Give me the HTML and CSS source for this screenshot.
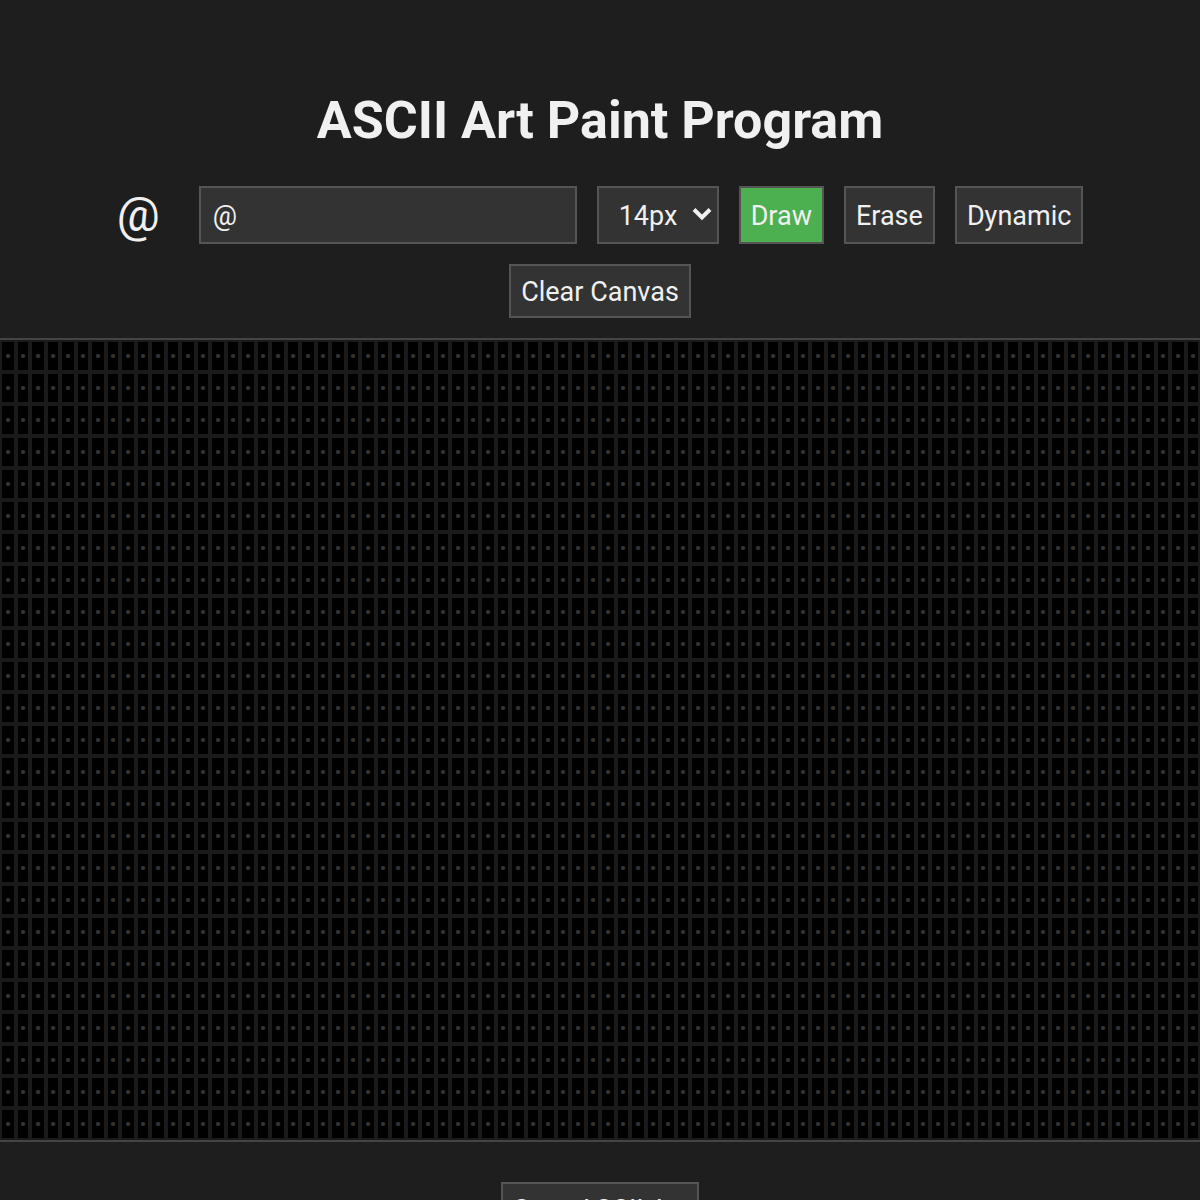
FILE: index.html
```html
<!DOCTYPE html>
<html lang="en">
<head>
    <meta charset="UTF-8">
    <meta name="viewport" content="width=device-width, initial-scale=1.0">
    <title>ASCII Art Paint Program</title>
    <link rel="stylesheet" href="styles.css">
</head>
<body>
    <h1>ASCII Art Paint Program</h1>
    <div class="controls">
        <div class="preview" id="preview">@</div>
        <input type="text" class="char-input" id="char-input" aria-label="Character" maxlength="1" value="@">
        <div class="size-picker">
            <select id="font-size" aria-label="Font size">
                <option>10px</option>
                <option>12px</option>
                <option selected>14px</option>
                <option>16px</option>
                <option>20px</option>
            </select>
            <svg class="arrow" viewBox="0 0 20 14" aria-hidden="true">
                <path d="M2 2.5 L10 10.5 L18 2.5" fill="none" stroke="#f0f0f0" stroke-width="4"/>
            </svg>
        </div>
        <button class="tool active" id="draw-btn">Draw</button>
        <button class="tool" id="erase-btn">Erase</button>
        <button class="tool" id="dynamic-btn">Dynamic</button>
        <button class="tool" id="clear-btn">Clear Canvas</button>
    </div>
    <div class="canvas" id="canvas"></div>
    <div class="footer">
        <button class="tool" id="save-btn">Save ASCII Art</button>
    </div>
    <script src="script.js"></script>
</body>
</html>
```
FILE: styles.css
```css
* {
    box-sizing: border-box;
}
body {
    margin: 0;
    padding-top: 80px;
    background-color: #1e1e1e;
    color: #f0f0f0;
    font-family: Roboto, sans-serif;
    font-size: 27px;
}
h1 {
    margin: 0 0 24px;
    font-size: 52px;
    line-height: 82px;
    text-align: center;
}
.controls {
    display: flex;
    flex-wrap: wrap;
    justify-content: center;
    gap: 20px;
    padding: 0 100px 20px;
}
.preview {
    width: 62px;
    font-size: 48px;
    line-height: 58px;
}
.char-input,
.size-picker select,
.tool {
    margin: 0;
    padding: 11px 10px 9px;
    border: 2px solid #555;
    border-radius: 0;
    background-color: #333;
    color: #f0f0f0;
    font-family: inherit;
    font-size: 27px;
    line-height: 30px;
}
.char-input {
    width: 378px;
    height: 58px;
    padding-left: 12px;
}
.size-picker {
    position: relative;
    display: flex;
}
.size-picker select {
    width: 122px;
    padding-left: 20px;
    appearance: none;
}
.arrow {
    position: absolute;
    top: 21px;
    right: 7px;
    width: 20px;
    height: 14px;
    pointer-events: none;
}
.tool {
    cursor: pointer;
}
.tool.active {
    background-color: #4caf50;
}
.canvas {
    display: grid;
    grid-template-columns: repeat(40, 8fr 7fr);
    grid-auto-rows: 32px;
    border-top: 2px solid #444;
    border-bottom: 2px solid #444;
    background-color: #000;
    color: #333;
    cursor: crosshair;
    user-select: none;
}
.cell {
    display: flex;
    align-items: center;
    justify-content: center;
    min-width: 0;
    border: 2px solid #1a1a1a;
    font-size: 27px;
    font-weight: bold;
    line-height: 28px;
}
.footer {
    padding: 40px 20px;
    text-align: center;
}
```
FILE: script.js
```js
const ROWS = 25;
const COLS = 80;
const EMPTY = '·';

const canvas = document.getElementById('canvas');
const charInput = document.getElementById('char-input');
const preview = document.getElementById('preview');
const tools = ['draw-btn', 'erase-btn', 'dynamic-btn'];
let mode = 'draw-btn';

for (let i = 0; i < ROWS * COLS; i++) {
    const cell = document.createElement('span');
    cell.className = 'cell';
    cell.textContent = EMPTY;
    canvas.appendChild(cell);
}

function paint(e) {
    if (e.buttons !== 1 || !e.target.classList.contains('cell')) return;
    e.target.textContent = mode === 'erase-btn' ? EMPTY : charInput.value;
}

canvas.addEventListener('mousedown', paint);
canvas.addEventListener('mouseover', paint);

charInput.addEventListener('input', () => {
    preview.textContent = charInput.value;
});

tools.forEach(id => {
    document.getElementById(id).addEventListener('click', () => {
        mode = id;
        tools.forEach(t => document.getElementById(t).classList.toggle('active', t === id));
    });
});

// Clear all cells
document.getElementById('clear-btn').addEventListener('click', () => {
    canvas.querySelectorAll('.cell').forEach(cell => cell.textContent = EMPTY);
});
```
